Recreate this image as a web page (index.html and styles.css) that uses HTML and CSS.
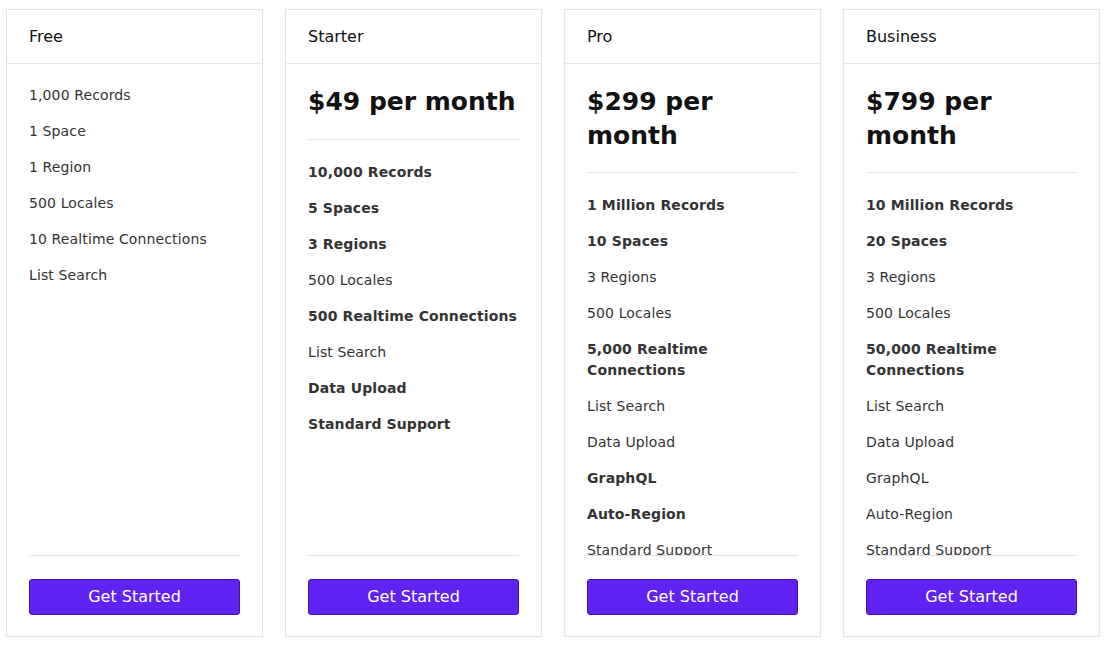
FILE: index.html
```html
<!DOCTYPE html>
<html lang="en">
<head>
<meta charset="utf-8">
<title>Pricing</title>
<link rel="stylesheet" href="styles.css">
</head>
<body>
<main class="plans">
  <section class="card">
    <header class="card-head">Free</header>
    <div class="card-body">
      <ul class="features">
        <li>1,000 Records</li>
        <li>1 Space</li>
        <li>1 Region</li>
        <li>500 Locales</li>
        <li>10 Realtime Connections</li>
        <li>List Search</li>
      </ul>
    </div>
    <footer class="card-foot"><button class="btn">Get Started</button></footer>
  </section>

  <section class="card">
    <header class="card-head">Starter</header>
    <div class="card-body">
      <h2 class="price">$49 per month</h2>
      <hr class="sep">
      <ul class="features">
        <li class="strong">10,000 Records</li>
        <li class="strong">5 Spaces</li>
        <li class="strong">3 Regions</li>
        <li>500 Locales</li>
        <li class="strong">500 Realtime Connections</li>
        <li>List Search</li>
        <li class="strong">Data Upload</li>
        <li class="strong">Standard Support</li>
      </ul>
    </div>
    <footer class="card-foot"><button class="btn">Get Started</button></footer>
  </section>

  <section class="card">
    <header class="card-head">Pro</header>
    <div class="card-body">
      <h2 class="price">$299 per month</h2>
      <hr class="sep">
      <ul class="features">
        <li class="strong">1 Million Records</li>
        <li class="strong">10 Spaces</li>
        <li>3 Regions</li>
        <li>500 Locales</li>
        <li class="strong">5,000 Realtime Connections</li>
        <li>List Search</li>
        <li>Data Upload</li>
        <li class="strong">GraphQL</li>
        <li class="strong">Auto-Region</li>
        <li>Standard Support</li>
      </ul>
    </div>
    <footer class="card-foot"><button class="btn">Get Started</button></footer>
  </section>

  <section class="card">
    <header class="card-head">Business</header>
    <div class="card-body">
      <h2 class="price">$799 per month</h2>
      <hr class="sep">
      <ul class="features">
        <li class="strong">10 Million Records</li>
        <li class="strong">20 Spaces</li>
        <li>3 Regions</li>
        <li>500 Locales</li>
        <li class="strong">50,000 Realtime Connections</li>
        <li>List Search</li>
        <li>Data Upload</li>
        <li>GraphQL</li>
        <li>Auto-Region</li>
        <li>Standard Support</li>
      </ul>
    </div>
    <footer class="card-foot"><button class="btn">Get Started</button></footer>
  </section>
</main>
</body>
</html>
```

FILE: styles.css
```css
* { box-sizing: border-box; }

html, body {
  margin: 0;
  padding: 0;
  background: #ffffff;
  font-family: "DejaVu Sans", "Liberation Sans", sans-serif;
  color: #333333;
}

.plans {
  display: flex;
  gap: 22px;
  padding: 9px 0 0 6px;
}

.card {
  width: 257px;
  height: 628px;
  display: flex;
  flex-direction: column;
  border: 1px solid #e3e3e3;
  background: #ffffff;
  box-shadow: 0 0 1px rgba(0, 0, 0, 0.04);
}

.card-head {
  padding: 16px 22px;
  font-size: 16px;
  line-height: 21px;
  color: #111111;
  border-bottom: 1px solid #e6e6e6;
  flex: none;
}

.card-body {
  flex: 1;
  min-height: 0;
  overflow: hidden;
  padding: 21px 22px 0;
}

.price {
  margin: 0 0 20px;
  font-size: 25px;
  line-height: 33.5px;
  font-weight: bold;
  color: #111111;
}

.sep {
  margin: 0 0 22px;
  border: 0;
  border-top: 1px solid #e6e6e6;
  height: 0;
}

.features {
  list-style: none;
  margin: 0;
  padding: 0;
}

.features li {
  font-size: 14px;
  line-height: 21px;
  margin-bottom: 15px;
  color: #333333;
  letter-spacing: 0.12px;
}

.features li.strong {
  font-weight: bold;
  letter-spacing: 0.12px;
}

.card-foot {
  flex: none;
  margin: 0 22px;
  padding: 23px 0 21px;
  border-top: 1px solid #e3e3e3;
}

.btn {
  display: block;
  width: 100%;
  height: 36px;
  margin: 0;
  padding: 0;
  background: #6022f2;
  border: 1px solid #3f12b8;
  border-radius: 3px;
  color: #ffffff;
  font-family: "DejaVu Sans", "Liberation Sans", sans-serif;
  font-size: 16px;
  line-height: 34px;
  text-align: center;
  cursor: pointer;
}
```
